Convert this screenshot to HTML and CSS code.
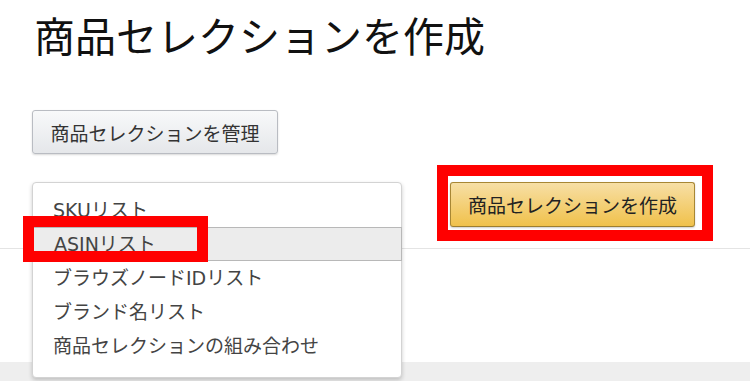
FILE: index.html
```html
<!DOCTYPE html>
<html lang="ja">
<head>
  <meta charset="UTF-8">
  <title>商品セレクションを作成</title>
  <link rel="stylesheet" href="styles.css">
</head>
<body>
  <div class="page">
    <h1>商品セレクションを作成</h1>

    <div class="toolbar">
      <button class="btn btn-plain">商品セレクションを管理</button>
    </div>

    <div class="create-row">
      <div class="picker">
        <ul class="menu">
          <li>SKUリスト</li>
          <li class="active">ASINリスト</li>
          <li>ブラウズノードIDリスト</li>
          <li>ブランド名リスト</li>
          <li>商品セレクションの組み合わせ</li>
        </ul>
        <div class="mark mark-asin"></div>
      </div>
      <div class="mark-box">
        <button class="btn btn-primary">商品セレクションを作成</button>
      </div>
    </div>
  </div>
  <div class="footer"></div>
</body>
</html>
```

FILE: styles.css
```css
body {
  margin: 0;
  font-family: "DejaVu Sans", "Noto Sans CJK JP", sans-serif;
  background: #fff;
  color: #333;
}
.page {
  padding-left: 32px;
  height: 362px;
}
h1 {
  margin: 0;
  padding: 10px 0 0 2px;
  font-family: "Noto Sans CJK JP", sans-serif;
  font-size: 41px;
  font-weight: normal;
  line-height: 48px;
  color: #111;
}
.toolbar {
  margin-top: 52px;
}
.btn {
  font-family: "Noto Sans CJK JP", sans-serif;
  font-size: 19px;
  line-height: 1;
  border-radius: 3px;
  cursor: pointer;
  padding: 0;
}
.btn-plain {
  width: 246px;
  height: 44px;
  color: #333;
  border: 1px solid #b9bcc2;
  background: linear-gradient(to bottom, #f8f9fa, #e5e7ea);
  box-shadow: 0 1px 2px rgba(0,0,0,0.15);
}
.create-row {
  display: flex;
  margin-top: 11px;
  margin-left: -32px;
  padding-left: 32px;
  height: 83px;
  border-bottom: 1px solid #e4e4e4;
}
.picker {
  position: relative;
  width: 370px;
  margin-top: 17px;
}
.menu {
  position: absolute;
  top: 0;
  left: 0;
  z-index: 2;
  width: 370px;
  margin: 0;
  padding: 10px 0 14px;
  list-style: none;
  background: #fff;
  border: 1px solid #d3d3d3;
  border-radius: 4px;
  box-shadow: 0 2px 4px rgba(0,0,0,0.2);
  box-sizing: border-box;
}
.menu li {
  height: 34px;
  line-height: 34px;
  padding-left: 20px;
  font-size: 19px;
  color: #444;
}
.menu li.active {
  margin: 0 -1px;
  height: 32px;
  line-height: 32px;
  padding-left: 21px;
  background: #ececec;
  border: 1px solid #b8b8b8;
}
.mark {
  position: absolute;
  z-index: 3;
  border: 11px solid #f00;
}
.mark-asin {
  left: -9px;
  top: 34px;
  width: 163px;
  height: 24px;
}
.mark-box {
  align-self: flex-start;
  margin-left: 35px;
  border: 11px solid #f00;
  padding: 6px 7px 3px 2px;
  background: #fff;
}
.btn-primary {
  display: block;
  width: 245px;
  height: 45px;
  color: #222;
  border: 1px solid #a88734;
  border-bottom-color: #9c7e31;
  background: linear-gradient(to bottom, #f7dfa5, #f0c14b);
  box-shadow: 0 1px 2px rgba(0,0,0,0.2);
}
.footer {
  height: 19px;
  background: #eee;
}
```
